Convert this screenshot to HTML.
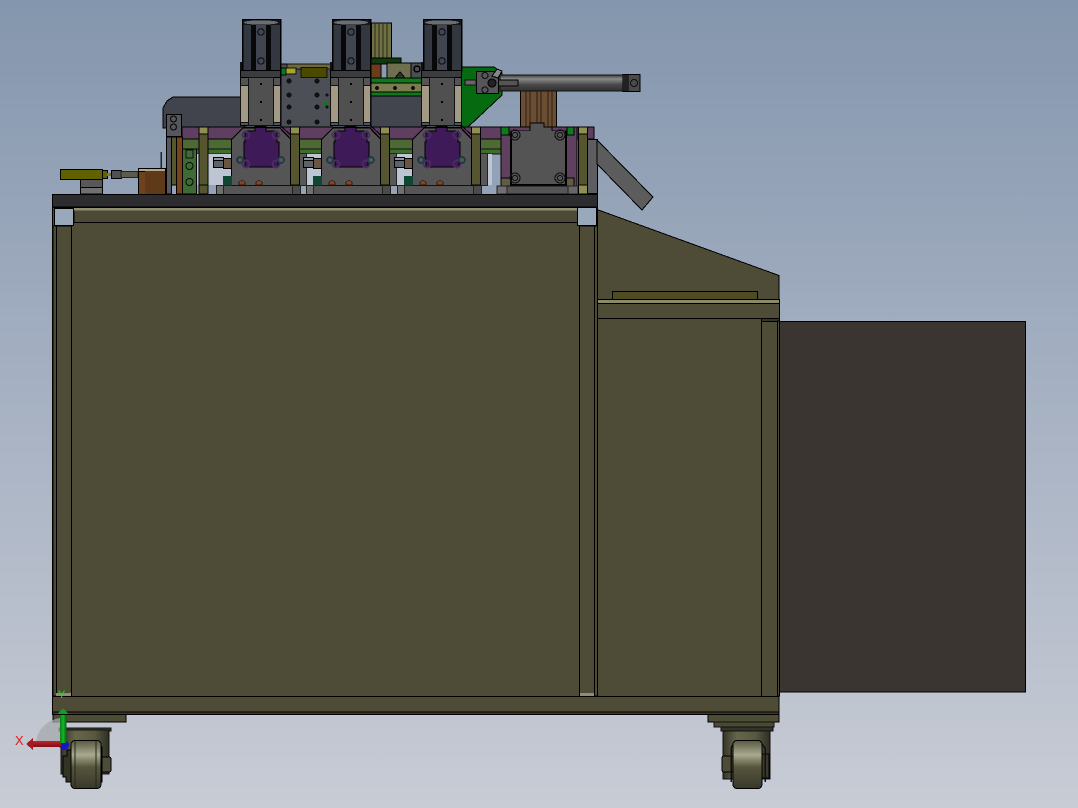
<!DOCTYPE html>
<html><head><meta charset="utf-8"><style>
html,body{margin:0;padding:0;width:1078px;height:808px;overflow:hidden;background:#a0acbe}
svg{display:block}
text{font-family:"Liberation Sans",sans-serif}
</style></head><body>
<svg width="1078" height="808" viewBox="0 0 1078 808" xmlns="http://www.w3.org/2000/svg" stroke-linejoin="miter" shape-rendering="crispEdges">
<defs>
<linearGradient id="bg" x1="0" y1="0" x2="0" y2="1"><stop offset="0" stop-color="#8496ad"/><stop offset=".4" stop-color="#a0acbf"/><stop offset="1" stop-color="#c8ccd5"/></linearGradient>
<linearGradient id="wh" x1="0" y1="0" x2="0" y2="1"><stop offset="0" stop-color="#5a5a42"/><stop offset=".3" stop-color="#a9a98e"/><stop offset=".55" stop-color="#56563e"/><stop offset="1" stop-color="#38382a"/></linearGradient>
<linearGradient id="br" x1="0" y1="0" x2="1" y2="0"><stop offset="0" stop-color="#35352a"/><stop offset=".3" stop-color="#66664c"/><stop offset=".7" stop-color="#58583f"/><stop offset="1" stop-color="#2e2e24"/></linearGradient>
<linearGradient id="rod" x1="0" y1="0" x2="0" y2="1"><stop offset="0" stop-color="#3d3d3d"/><stop offset=".25" stop-color="#8a8a8a"/><stop offset=".6" stop-color="#4a4a4a"/><stop offset="1" stop-color="#303030"/></linearGradient>
<linearGradient id="gr" x1="0" y1="0" x2="1" y2="0"><stop offset="0" stop-color="#0b7a17"/><stop offset=".5" stop-color="#12b825"/><stop offset="1" stop-color="#06600f"/></linearGradient>
<linearGradient id="rd" x1="0" y1="0" x2="0" y2="1"><stop offset="0" stop-color="#c8202a"/><stop offset="1" stop-color="#7d0f18"/></linearGradient>

<g id="st">
  <!-- grey column beside post -->
  <rect x="299.500" y="153.500" width="7" height="32" fill="#585858" stroke="#222"/>
  <!-- cylinder -->
  <rect x="242.500" y="19.500" width="38" height="51" fill="#33373f" stroke="#000" stroke-width="1.500"/>
  <rect x="243" y="20" width="37" height="5" fill="#15161a"/>
  <rect x="251" y="25" width="5" height="45" fill="#08080a"/>
  <rect x="266" y="25" width="5" height="45" fill="#08080a"/>
  <rect x="256" y="25" width="10" height="45" fill="#41454f"/>
  <ellipse cx="261" cy="22.500" rx="17" ry="2.200" fill="#6a6d73"/>
  <circle cx="261" cy="32" r="3.200" fill="none" stroke="#111" stroke-width="1.200"/>
  <circle cx="261" cy="61" r="3.200" fill="none" stroke="#111" stroke-width="1.200"/>
  <rect x="240" y="62" width="2" height="9" fill="#111"/>
  <rect x="240.500" y="70.500" width="40" height="7" fill="#3b3c40" stroke="#000"/>
  <!-- block -->
  <rect x="240.500" y="77.500" width="40" height="48" fill="#545454" stroke="#000"/>
  <rect x="240.500" y="85.500" width="8" height="37" fill="#a39a86" stroke="#111"/>
  <rect x="273.500" y="85.500" width="7" height="37" fill="#a39a86" stroke="#111"/>
  <rect x="248.500" y="77.500" width="25" height="48" fill="#505050" stroke="#111"/>
  <rect x="260" y="83" width="2" height="2" fill="#000"/><rect x="260" y="101" width="2" height="2" fill="#000"/><rect x="260" y="119" width="2" height="2" fill="#000"/>
  <!-- housing -->
  <path d="M231.500 139.500L243 128H255V126.500H266V128H280L290.500 139V185.500H231.500Z" fill="#555" stroke="#000" stroke-width="1.300"/>
  <path d="M280 125L291 135.500V143" fill="none" stroke="#000"/>
  <path d="M245 131H255V127.500H266V131H277V142H279V158H278V167H245V158H244V142H245Z" fill="#3e1a58" stroke="#000"/>
  <g fill="none" stroke-width="1.800">
    <circle cx="246" cy="135" r="3.500" stroke="#4a2c5e"/><circle cx="276" cy="135" r="3.500" stroke="#4a2c5e"/>
    <circle cx="246" cy="164" r="3.500" stroke="#4a2c5e"/><circle cx="276" cy="164" r="3.500" stroke="#4a2c5e"/>
    <circle cx="240" cy="160" r="3" stroke="#1c3c48"/><circle cx="281" cy="160" r="3" stroke="#1c3c48"/>
  </g>
  <path d="M239 185V182L242 180L245 182V185Z" fill="#8a4320" stroke="#2a1a10" stroke-width=".6"/>
  <path d="M256 185V182L259 180L262 182V185Z" fill="#8a4320" stroke="#2a1a10" stroke-width=".6"/>
  <!-- base -->
  <rect x="216.500" y="185.500" width="84" height="9" fill="#565656" stroke="#111"/>
  <rect x="216.500" y="185.500" width="7" height="9" fill="#707070" stroke="#222"/>
  <rect x="292.500" y="185.500" width="8" height="9" fill="#4b4b4b" stroke="#222"/>
  <!-- olive post -->
  <rect x="290.500" y="127" width="9" height="58" fill="#55562f" stroke="#000"/>
  <rect x="290.500" y="127" width="9" height="7" fill="#8f8f52" stroke="#000"/>
  <!-- small clamp on left -->
  <rect x="213.500" y="157.500" width="10" height="10" fill="#5d6169" stroke="#000"/>
  <rect x="213.500" y="157.500" width="10" height="3" fill="#8f939b" stroke="#000"/>
  <rect x="223.500" y="158.500" width="8" height="10" fill="#6a5442" stroke="#000"/>
  <rect x="223" y="176" width="9" height="9.500" fill="#0f4735"/>
</g>
</defs>

<rect width="1078" height="808" fill="url(#bg)"/>

<!-- back hood -->
<path d="M163 128V108L167 101L173 97H245V128Z" fill="#41444d" stroke="#000"/>
<rect x="371" y="95" width="55" height="32" fill="#42454e" stroke="#000"/>
<!-- rails -->
<rect x="182" y="127" width="412" height="12" fill="#5f3f60" stroke="#000"/>
<rect x="182" y="139" width="392" height="10" fill="#4e6a34" stroke="#000"/>
<rect x="182" y="149" width="392" height="5" fill="#3f6d2d" stroke="#111"/>
<rect x="172" y="154" width="320" height="31" fill="#bdc5d2"/>
<rect x="160.500" y="152" width="1.500" height="19" fill="#222"/>

<!-- centre panel -->
<rect x="281" y="64" width="51" height="63" fill="#4c4f56" stroke="#000"/>
<rect x="287" y="64" width="45" height="5" fill="#6e6a3e" stroke="#111" stroke-width=".6"/>
<rect x="281" y="68" width="5" height="7" fill="#0c7a1a" stroke="#000" stroke-width=".6"/>
<rect x="286" y="68" width="10" height="6" fill="#a7a52a" stroke="#111" stroke-width=".6"/>
<rect x="301" y="67.500" width="26" height="10" fill="#4b4800" stroke="#111" stroke-width="1.200"/>
<g fill="#111">
<circle cx="289" cy="81" r="2.500"/><circle cx="317" cy="81" r="2.500"/>
<circle cx="289" cy="95" r="2.500"/><circle cx="317" cy="95" r="2.500"/>
<circle cx="289" cy="107" r="2.500"/><circle cx="317" cy="107" r="2.500"/>
<circle cx="289" cy="122" r="2.500"/><circle cx="317" cy="122" r="2.500"/>
<circle cx="327" cy="95" r="1.500"/><circle cx="327" cy="107" r="1.500"/>
</g>
<rect x="324" y="102" width="3" height="3" fill="#0c7a1a"/>

<!-- green triangle back -->
<path d="M461 67H494L502 73V95L468 127H461Z" fill="#066b10" stroke="#000"/>

<!-- right upper block between cyl 2 and 3 -->
<rect x="371.500" y="23" width="20" height="35" fill="#6f7043" stroke="#000"/>
<path d="M375 23V58M379 23V58M383 23V58M387 23V58" stroke="#2a2a18"/>
<rect x="371" y="58" width="30" height="6" fill="#0f3a10" stroke="#000"/>
<rect x="371" y="64" width="10" height="15" fill="#6b3d1d" stroke="#000"/>
<rect x="387" y="63" width="24" height="15" fill="#6f6f50" stroke="#000"/>
<rect x="411" y="63" width="12" height="15" fill="#4c4e53" stroke="#000"/>
<circle cx="417" cy="69" r="3" fill="none" stroke="#000" stroke-width="1.500"/>
<path d="M395 78L400 72L405 78Z" fill="#333" stroke="#000"/>
<rect x="371" y="78" width="52" height="5" fill="#0f7a1b" stroke="#000"/>
<rect x="371" y="83" width="52" height="9" fill="#7b7b50" stroke="#000"/>
<circle cx="377" cy="88" r="2" fill="#111"/><circle cx="395" cy="88" r="2" fill="#111"/><circle cx="413" cy="88" r="2" fill="#111"/>
<rect x="371" y="92" width="52" height="4" fill="#0f7a1b" stroke="#000"/>

<!-- stations -->
<use href="#st"/>
<use href="#st" x="90"/>
<use href="#st" x="181"/>

<!-- left post -->
<rect x="199" y="127" width="9" height="58" fill="#55562f" stroke="#000"/>
<rect x="199" y="127" width="9" height="7" fill="#8f8f52" stroke="#000"/>
<rect x="199" y="185" width="9" height="9" fill="#55562f" stroke="#000"/>

<!-- left assembly -->
<rect x="166.500" y="114.500" width="15" height="22" fill="#55575c" stroke="#000"/>
<circle cx="173.500" cy="119" r="3" fill="none" stroke="#111" stroke-width="1.300"/>
<circle cx="173.500" cy="127" r="3" fill="none" stroke="#111" stroke-width="1.300"/>
<rect x="166.500" y="137" width="5" height="57" fill="#55585e" stroke="#000"/>
<rect x="171.500" y="137" width="5" height="48" fill="#56572d" stroke="#000"/>
<rect x="176.500" y="137" width="6" height="57" fill="#7b4418" stroke="#000"/>
<rect x="182.500" y="149" width="14" height="45" fill="#3e6a35" stroke="#000"/>
<circle cx="189.500" cy="166" r="3.500" fill="none" stroke="#111" stroke-width="1.200"/>
<circle cx="189.500" cy="182" r="3.500" fill="none" stroke="#111" stroke-width="1.200"/>
<rect x="186" y="150" width="7" height="8" fill="none" stroke="#111"/>

<!-- left small cylinder -->
<rect x="60.500" y="169.500" width="42" height="10" fill="#626100" stroke="#000"/>
<rect x="102.500" y="170.500" width="5" height="8" fill="#626100" stroke="#000"/>
<rect x="107" y="173" width="4" height="3" fill="#7a7a20"/>
<rect x="111.500" y="170.500" width="10" height="8" fill="#4c5058" stroke="#000"/>
<rect x="121" y="171.500" width="17" height="6" fill="#5c5c48" stroke="#222"/>
<rect x="80.500" y="179.500" width="22" height="8" fill="#585858" stroke="#000"/>
<rect x="80.500" y="187.500" width="22" height="6.500" fill="#707070" stroke="#000"/>
<rect x="138.500" y="170.500" width="27" height="24" fill="#6e421c" stroke="#000"/>
<rect x="138.500" y="168.500" width="27" height="3" fill="#b3a68e" stroke="#000"/>
<rect x="145" y="171" width="20" height="23" fill="#5e3a18"/>

<!-- right large cylinder -->
<rect x="520.500" y="91" width="36" height="36" fill="#6b4d33" stroke="#000"/>
<path d="M526 91V127M530 91V127M537 91V127M541 91V127M548 91V127M552 91V127" stroke="#2b1f14"/>
<rect x="500" y="75" width="123" height="16" fill="url(#rod)" stroke="#111"/>
<rect x="623" y="74.500" width="17" height="17" fill="#4a4a4a" stroke="#000"/>
<circle cx="634" cy="83" r="3.500" fill="none" stroke="#111"/>
<rect x="623" y="75" width="6" height="16" fill="#222"/>
<rect x="498" y="80" width="20" height="6" fill="#555" stroke="#000"/>
<rect x="476.500" y="71.500" width="22" height="22" fill="#55555a" stroke="#000"/>
<circle cx="485" cy="75.500" r="3" fill="none" stroke="#111" stroke-width="1.200"/>
<circle cx="485" cy="90" r="3" fill="none" stroke="#111" stroke-width="1.200"/>
<circle cx="492" cy="83" r="4" fill="#222" stroke="#000"/>
<path d="M492 76L497 69L502 71L498 78Z" fill="#85858a" stroke="#000"/>
<rect x="465" y="80" width="11" height="5" fill="#666" stroke="#111"/>

<!-- right station -->
<rect x="501" y="127" width="76" height="59" fill="#5f405f" stroke="#000"/>
<rect x="501" y="127" width="8" height="8" fill="#0f7a1b" stroke="#000"/>
<rect x="567" y="127" width="7" height="8" fill="#0f7a1b" stroke="#000"/>
<path d="M501 178H574V187H501Z" fill="#5f5d43" stroke="#000"/>
<path d="M530 123H544V127H552V131H566V181H511V131H530Z" fill="#545454" stroke="#000"/>
<path d="M511 131V185H566V131" fill="#545454" stroke="#000" stroke-width="2"/>
<g fill="none" stroke="#151515" stroke-width="1.200">
<circle cx="515" cy="135" r="5"/><circle cx="515" cy="135" r="2.500"/>
<circle cx="560" cy="135" r="5"/><circle cx="560" cy="135" r="2.500"/>
<circle cx="515" cy="178" r="5"/><circle cx="515" cy="178" r="2.500"/>
<circle cx="560" cy="178" r="5"/><circle cx="560" cy="178" r="2.500"/>
</g>
<rect x="497" y="186" width="100" height="8" fill="#555" stroke="#111"/>
<rect x="497" y="186" width="10" height="8" fill="#707070" stroke="#222"/>
<rect x="568" y="186" width="10" height="8" fill="#666" stroke="#222"/>
<rect x="578.500" y="127" width="9" height="67" fill="#55562f" stroke="#000"/>
<rect x="578.500" y="127" width="9" height="7" fill="#8f8f52" stroke="#000"/>
<rect x="578.500" y="185" width="9" height="9" fill="#8f8f52" stroke="#000"/>
<rect x="587.500" y="139.500" width="10" height="54" fill="#5e5e60" stroke="#000"/>
<path d="M597 140L653 197L642 210L597 164Z" fill="#5c5c5c" stroke="#000"/>

<!-- top plate -->
<rect x="52.500" y="194.500" width="545" height="12.500" fill="#2d2d2f" stroke="#000"/>

<!-- foot plates + casters -->
<g>
<rect x="53" y="712" width="73" height="10" fill="#4d4c34" stroke="#000"/>
<rect x="59" y="728" width="52" height="3" fill="#3a3a2c" stroke="#111"/>
<rect x="61" y="730" width="48" height="44" fill="url(#br)" stroke="#111"/>
<path d="M63 756H67V750H72V782H66V777H63Z" fill="#333326" stroke="#000"/>
<rect x="100" y="757" width="11" height="15" rx="2" fill="#4c4c38" stroke="#000"/>
<rect x="96" y="747" width="6" height="35" fill="#34342a" stroke="#000"/>
<rect x="71" y="740.500" width="30" height="48" rx="4" fill="url(#wh)" stroke="#000"/>
<path d="M75 741V788M96 741V788" stroke="#26261c"/>
</g>
<g>
<rect x="708" y="712" width="71" height="10" fill="#4d4c34" stroke="#000"/>
<rect x="714" y="722" width="60" height="5" fill="#4a4a34" stroke="#111"/>
<rect x="721" y="727" width="52" height="4" fill="#34342a" stroke="#111"/>
<rect x="723" y="731" width="47" height="48" fill="url(#br)" stroke="#111"/>
<rect x="722" y="756" width="11" height="16" rx="2" fill="#4c4c38" stroke="#000"/>
<rect x="761" y="754" width="8" height="24" fill="#3a3a2c" stroke="#000"/>
<path d="M731 782V748L735 741H760L765 748V782" fill="none" stroke="#111" stroke-width="1.500"/>
<rect x="733" y="740.500" width="29" height="48" rx="4" fill="url(#wh)" stroke="#000"/>
</g>

<!-- main body -->
<path d="M597 209.500L779 275.500V712H597Z" fill="#4e4c37" stroke="#000"/>
<rect x="52.500" y="207.500" width="545" height="505" fill="#4e4c37" stroke="#000"/>
<rect x="74" y="207.500" width="505" height="15" fill="#4c4a34" stroke="#000"/>
<rect x="74" y="208" width="505" height="2.500" fill="#8e8e70"/>
<rect x="56.500" y="226" width="15" height="470" fill="#4e4c37" stroke="#000"/>
<rect x="579.500" y="226" width="15" height="470" fill="#4e4c37" stroke="#000"/>
<rect x="594.500" y="226" width="3" height="470" fill="#4e4c37" stroke="#000"/>
<rect x="53" y="226" width="3.500" height="470" fill="#4e4c37" stroke="#000"/>
<!-- hole corners -->
<rect x="54.500" y="208.500" width="19" height="17" fill="#9aa8bb" stroke="#000"/>
<rect x="577.500" y="207.500" width="19" height="18" fill="#9aa8bb" stroke="#000"/>
<!-- bars -->
<rect x="52.500" y="696.500" width="726.500" height="15.500" fill="#4e4c37" stroke="#000"/>
<rect x="56" y="693" width="15" height="3" fill="#8e8e70"/>
<rect x="580" y="693" width="14" height="3" fill="#8e8e70"/>
<rect x="762" y="693" width="15" height="3" fill="#8e8e70"/>
<rect x="52.500" y="712" width="726.500" height="2.500" fill="#3c3b2a" stroke="#000"/>
<!-- right section details -->
<rect x="612.500" y="291.500" width="145" height="8" fill="#4f4c24" stroke="#000"/>
<rect x="597.500" y="299.500" width="182" height="4" fill="#8a8a68" stroke="#000"/>
<rect x="597.500" y="303.500" width="182" height="15" fill="#4e4c37" stroke="#000"/>
<rect x="761.500" y="318.500" width="16" height="378" fill="#4e4c37" stroke="#000"/>
<rect x="761.500" y="318.500" width="18" height="3" fill="#36352a" stroke="#000"/>
<rect x="777.500" y="321" width="2" height="375" fill="#4e4c37" stroke="#000"/>
<!-- dark box -->
<rect x="779.500" y="321.500" width="246" height="370.500" fill="#3a3531" stroke="#000"/>

<!-- triad -->
<path d="M36 742A27 27 0 0 1 63 718V742Z" fill="#a6a9ae" opacity=".75"/>
<circle cx="64" cy="745" r="5" fill="#1616c4"/>
<rect x="33" y="741" width="28" height="6" fill="url(#rd)"/>
<path d="M26 744L33 738V750Z" fill="#a81a22"/>
<rect x="60" y="715" width="6.500" height="28" fill="url(#gr)"/>
<path d="M57.500 714L63 708L68.500 714Z" fill="#10a020"/>
<text x="15" y="745" font-size="13" fill="#e01818">X</text>
<text x="58" y="698" font-size="11" fill="#18e018">Y</text>
</svg>
</body></html>
